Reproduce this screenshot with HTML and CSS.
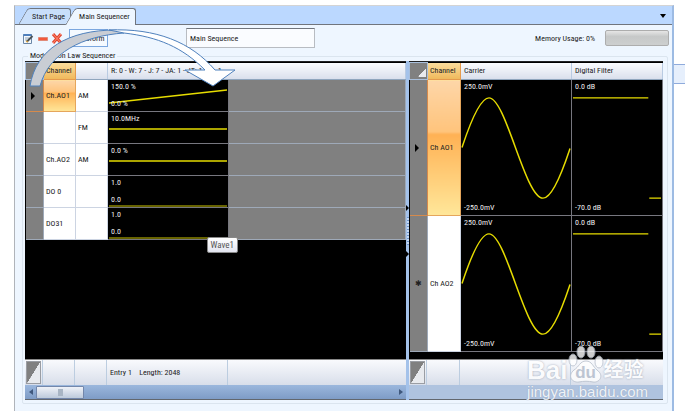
FILE: index.html
```html
<!DOCTYPE html>
<html lang="en">
<head>
    <meta charset="UTF-8">
    <meta name="viewport" content="width=device-width, initial-scale=1.0">
    <title>Main Sequencer</title>
    <link rel="stylesheet" href="styles.css">
</head>
<body>
    <main class="window">
        <!-- Tabs -->
        <nav class="tab-bar">
            <button class="tab"><span>Start Page</span></button>
            <button class="tab active"><span>Main Sequencer</span></button>
            <button class="tab-menu" aria-label="Tab list">
                <svg width="6" height="4" viewBox="0 0 6 4"><path d="M0 0h6L3 4z"/></svg>
            </button>
        </nav>

        <!-- Toolbar -->
        <div class="toolbar">
            <button class="tool" aria-label="Edit">
                <svg width="11" height="11" viewBox="0 0 11 11">
                    <path d="M.5 1.5h8v9h-8z" fill="#f4f8fc" stroke="#6b87a8"/>
                    <path d="M.5 1h8v2h-8z" fill="#4d7fbd"/>
                    <path d="M2 5h4M2 7h2" stroke="#93a7bb"/>
                    <path d="M4 8.500L9.500 3" stroke="#4a5358" stroke-width="2"/>
                    <path d="M3.500 9l1-1" stroke="#d39b34" stroke-width="2"/>
                </svg>
            </button>
            <button class="tool" aria-label="Remove">
                <svg width="10" height="11" viewBox="0 0 10 11"><path d="M.5 4.500h9v3h-9z" fill="#f2583c" stroke="#e08a78"/></svg>
            </button>
            <button class="tool" aria-label="Delete">
                <svg width="10" height="11" viewBox="0 0 10 11">
                    <path d="M1 1l8 9M9 1L1 10" stroke="#e2452f" stroke-width="3"/>
                    <path d="M1 1l8 9M9 1L1 10" stroke="#ff8a72" stroke-width="1"/>
                </svg>
            </button>
            <button class="wave-button">Waveform</button>
            <input class="sequence-name" type="text" value="Main Sequence" aria-label="Sequence name">
            <label class="memory" for="memory">Memory Usage: 0%</label>
            <progress class="memory-bar" id="memory" value="0" max="100"></progress>
        </div>

        <!-- Sequencer -->
        <fieldset class="group">
            <legend>Modulation Law Sequencer</legend>
            <div class="panes">
                <section class="pane">
                    <table class="grid law-grid">
                        <colgroup>
                            <col class="col-head"><col class="col-channel"><col class="col-type"><col class="col-wave"><col>
                        </colgroup>
                        <thead>
                            <tr>
                                <th class="corner"><i class="fold small"></i></th>
                                <th class="selected">Channel</th>
                                <th></th>
                                <th colspan="2">R: 0 - W: 7 - J: 7 - JA: 1 - JT: 1 - 1 - 1</th>
                            </tr>
                        </thead>
                        <tbody>
                            <tr>
                                <td class="row-head current"><i class="marker"></i></td>
                                <td class="channel selected">Ch.AO1</td>
                                <td class="type">AM</td>
                                <td class="wave"><div class="plot">
                                    <svg viewBox="0 0 120 30" preserveAspectRatio="none"><path d="M1 22L119 9"/></svg>
                                    <span>150.0 %</span><span>0.0 %</span>
                                </div></td>
                                <td class="empty"></td>
                            </tr>
                            <tr>
                                <td class="row-head"></td>
                                <td class="channel"></td>
                                <td class="type">FM</td>
                                <td class="wave"><div class="plot">
                                    <svg viewBox="0 0 120 30" preserveAspectRatio="none"><path d="M1 16H119"/></svg>
                                    <span>10.0MHz</span>
                                </div></td>
                                <td class="empty"></td>
                            </tr>
                            <tr>
                                <td class="row-head"></td>
                                <td class="channel">Ch.AO2</td>
                                <td class="type">AM</td>
                                <td class="wave"><div class="plot">
                                    <svg viewBox="0 0 120 30" preserveAspectRatio="none"><path d="M1 16H119"/></svg>
                                    <span>0.0 %</span>
                                </div></td>
                                <td class="empty"></td>
                            </tr>
                            <tr>
                                <td class="row-head"></td>
                                <td class="channel">DO 0</td>
                                <td class="type"></td>
                                <td class="wave low"><div class="plot">
                                    <svg viewBox="0 0 120 30" preserveAspectRatio="none"><path d="M1 29H119"/></svg>
                                    <span>1.0</span><span>0.0</span>
                                </div></td>
                                <td class="empty"></td>
                            </tr>
                            <tr>
                                <td class="row-head"></td>
                                <td class="channel">DO31</td>
                                <td class="type"></td>
                                <td class="wave low"><div class="plot">
                                    <svg viewBox="0 0 120 30" preserveAspectRatio="none"><path d="M1 29H119"/></svg>
                                    <span>1.0</span><span>0.0</span>
                                    <div class="tooltip">Wave1</div>
                                </div></td>
                                <td class="empty"></td>
                            </tr>
                        </tbody>
                    </table>
                    <div class="footer">
                        <div class="cell-head"><i class="fold"></i></div>
                        <div class="cell-channel"></div>
                        <div class="cell-type"></div>
                        <div class="cell-wave">Entry 1 &nbsp;&nbsp; Length: 2048</div>
                        <div class="cell-rest"></div>
                    </div>
                    <div class="scrollbar">
                        <button aria-label="Scroll left"><svg width="4" height="6" viewBox="0 0 4 6"><path d="M4 0v6L0 3z"/></svg></button>
                        <div class="thumb"></div>
                        <button aria-label="Scroll right"><svg width="4" height="6" viewBox="0 0 4 6"><path d="M0 0v6l4-3z"/></svg></button>
                    </div>
                </section>

                <div class="splitter">
                    <svg width="3" height="6" viewBox="0 0 3 6"><path d="M0 0v6l3-3z"/></svg>
                    <i class="grip"></i>
                    <svg width="3" height="6" viewBox="0 0 3 6"><path d="M0 0v6l3-3z"/></svg>
                </div>

                <section class="pane">
                    <table class="grid carrier-grid">
                        <colgroup>
                            <col class="col-head"><col class="col-name"><col class="col-carrier"><col>
                        </colgroup>
                        <thead>
                            <tr>
                                <th class="corner"><i class="fold small"></i></th>
                                <th class="selected">Channel</th>
                                <th>Carrier</th>
                                <th>Digital Filter</th>
                            </tr>
                        </thead>
                        <tbody>
                            <tr>
                                <td class="row-head current"><i class="marker"></i></td>
                                <td class="channel selected">Ch AO1</td>
                                <td class="wave"><div class="plot">
                                    <svg viewBox="0 0 110 135" preserveAspectRatio="none"><path d="M1 67C5 55 17 17 28 17C45 17 64 118 82 118C93 118 105 80 109 68"/></svg>
                                    <span>250.0mV</span><span>-250.0mV</span>
                                </div></td>
                                <td class="wave"><div class="plot">
                                    <svg viewBox="0 0 92 135" preserveAspectRatio="none"><path d="M1 17H78M79 118H91"/></svg>
                                    <span>0.0 dB</span><span>-70.0 dB</span>
                                </div></td>
                            </tr>
                            <tr>
                                <td class="row-head">✱</td>
                                <td class="channel">Ch AO2</td>
                                <td class="wave"><div class="plot">
                                    <svg viewBox="0 0 110 135" preserveAspectRatio="none"><path d="M1 67C5 55 17 17 28 17C45 17 64 118 82 118C93 118 105 80 109 68"/></svg>
                                    <span>250.0mV</span><span>-250.0mV</span>
                                </div></td>
                                <td class="wave"><div class="plot">
                                    <svg viewBox="0 0 92 135" preserveAspectRatio="none"><path d="M1 17H78M79 118H91"/></svg>
                                    <span>0.0 dB</span><span>-70.0 dB</span>
                                </div></td>
                            </tr>
                        </tbody>
                    </table>
                    <div class="footer">
                        <div class="cell-head"><i class="fold"></i></div>
                        <div class="cell-name"></div>
                        <div class="cell-carrier"></div>
                        <div class="cell-rest"></div>
                    </div>
                    <div class="scroll-blank"></div>
                </section>
            </div>
        </fieldset>

        <!-- Drag arrow from the row header to the wave cell -->
        <svg class="drag-arrow" width="210" height="62" viewBox="0 0 210 62">
            <path d="M2 59C8 22 40 3 88 3L96 6C54 9 21 26 12 59Z" fill="#c9cdd4" stroke="#4f81bd"/>
            <path d="M81 3C128 1 163 15 187 43H207L185 59L157 43H177C154 20 130 10 96 6Z" fill="#fff" stroke="#4f81bd"/>
        </svg>

        <!-- Watermark -->
        <div class="watermark">
            <div class="brand">
                <span>Bai</span>
                <span class="paw">
                    <svg width="36" height="38" viewBox="0 0 36 38">
                        <ellipse cx="5" cy="15" rx="4" ry="6"/>
                        <ellipse cx="13" cy="7" rx="4" ry="6"/>
                        <ellipse cx="23" cy="7" rx="4" ry="6"/>
                        <ellipse cx="31" cy="17" rx="4" ry="6"/>
                        <path d="M18 16C24 16 25 22 29 25C37 31 31 38 25 37C20 36 16 36 11 37C4 38-1 31 6 25C11 22 12 16 18 16Z"/>
                    </svg>
                    <b>du</b>
                </span>
                <span class="cjk">经验</span>
            </div>
            <div class="site">jingyan.baidu.com</div>
        </div>
    </main>
    <aside class="side-strip"></aside>
</body>
</html>
```
FILE: styles.css
```css
/* General */
* {
    box-sizing: border-box;
}

body {
    margin: 0;
    padding: 5px 0 4px 14px;
    height: 100vh;
    display: flex;
    background: #fff;
    color: #222;
    font-family: "Roboto Condensed", "Open Sans Condensed", Roboto, "Liberation Sans", sans-serif;
    font-size: 8px;
    line-height: 11px;
}

button,
input {
    font: inherit;
    color: inherit;
    padding: 0;
    margin: 0;
    border: none;
    background: none;
}

.window {
    position: relative;
    flex: 1;
    min-width: 0;
    display: flex;
    flex-direction: column;
    background: #eef6ff;
    border-left: 1px solid #b0b4ba;
    border-top: 1px solid #d4d4d4;
    border-right: 2px solid #9dbbe3;
}

.side-strip {
    width: 11px;
    height: 20px;
    margin-top: 59px;
    border: 1px solid #8fabdc;
    border-width: 1px 0;
    background: #e6effc;
}

/* Tabs */
.tab-bar {
    display: flex;
    align-items: flex-end;
    height: 19px;
    padding-left: 4px;
    background: #bbd8ff;
    border-bottom: 1px solid #70757d;
}

.tab {
    position: relative;
    z-index: 0;
    height: 16px;
    padding: 0 6px 0 13px;
    white-space: nowrap;
}

.tab::before,
.tab::after {
    content: "";
    position: absolute;
    z-index: -1;
    top: 0;
    bottom: 0;
    background: #c8defa;
    border-top: 1px solid #70757d;
}

.tab::before {
    left: 4px;
    width: 50%;
    border-left: 1px solid #70757d;
    border-radius: 3px 0 0 0;
    transform: skewX(-30deg);
}

.tab::after {
    left: 35%;
    right: 0;
    border-right: 1px solid #70757d;
    border-radius: 0 3px 0 0;
}

.tab.active {
    height: 17px;
    margin-bottom: -1px;
    margin-left: -5px;
}

.tab.active::before,
.tab.active::after {
    background: #eef6ff;
}

.tab-menu {
    margin-left: auto;
    padding: 6px;
    line-height: 0;
}

/* Toolbar */
.toolbar {
    display: flex;
    align-items: center;
    height: 26px;
    padding: 0 3px 0 8px;
    gap: 4px;
}

.tool {
    line-height: 0;
}

.wave-button {
    width: 39px;
    height: 18px;
    margin-left: 3px;
    border: 1px solid #7ba7df;
    background: #f5faff;
}

.sequence-name {
    width: 129px;
    height: 20px;
    margin-left: 74px;
    padding-left: 3px;
    background: #fafcff;
    border: 1px solid #b8bcc2;
    border-top-color: #70757d;
}

.memory {
    margin-left: auto;
    padding-right: 6px;
}

.memory-bar {
    appearance: none;
    width: 64px;
    height: 16px;
    border: 1px solid #adadad;
    border-radius: 2px;
    background: linear-gradient(#e6e6e6, #c6c8c8 40%, #cdcfcf);
}

.memory-bar::-webkit-progress-bar {
    background: transparent;
}

/* Group box */
.group {
    flex: 1;
    min-width: 0;
    min-height: 0;
    display: flex;
    flex-direction: column;
    margin: 0 4px 7px 7px;
    padding: 0 4px 3px 2px;
    border: 1px solid #dbe5ef;
    border-radius: 2px;
}

.group legend {
    margin-left: 3px;
    padding: 0 2px;
    line-height: 10px;
}

.panes {
    flex: 1;
    min-height: 0;
    display: grid;
    grid-template-columns: minmax(0, 3fr) 3px minmax(0, 2fr);
}

.pane {
    display: flex;
    flex-direction: column;
    min-height: 0;
    background: #000;
    border-top: 1px solid #222;
    border-bottom: 1px solid #62676e;
}

/* Grids */
.grid {
    width: 100%;
    table-layout: fixed;
    border-collapse: collapse;
}

.col-head,
.cell-head {
    width: 18px;
}

.col-channel,
.col-type,
.cell-channel,
.cell-type {
    width: 32px;
}

.col-wave,
.cell-wave {
    width: 121px;
}

.col-name,
.cell-name {
    width: 33px;
}

.col-carrier,
.cell-carrier {
    width: 111px;
}

.grid th {
    height: 17px;
    padding: 0 0 0 3px;
    font-weight: normal;
    text-align: left;
    white-space: nowrap;
    background: linear-gradient(#fbfcfe, #d9dfec);
    border-right: 1px solid #b9cbe2;
    border-bottom: 1px solid #8fa5bd;
}

.grid th.selected {
    padding-left: 2px;
    background: linear-gradient(#fadc9c, #f0b95c);
    border-color: #e59a4c;
}

.grid th.corner {
    padding: 0;
    background: #808080;
    border: 1px solid #a8bfdc;
}

.grid td {
    height: 32px;
    padding: 0;
    border-right: 1px solid #ccd4e2;
    border-bottom: 1px solid #ccd4e2;
    background: #fff;
    white-space: nowrap;
}

.carrier-grid td {
    height: 136px;
}

.grid .row-head,
.grid .empty {
    background: #808080;
    border-color: #9ea9b8;
    text-align: center;
}

.grid .row-head.current {
    border-color: #d58a4c;
}

.grid .channel,
.grid .type {
    padding-left: 2px;
}

.grid .channel.selected {
    background: linear-gradient(#fdd6a8, #ffc47c 38%, #ffb154 40%, #ffe79a);
    border-color: #e5a65c;
}

.grid .wave {
    background: #000;
    border: 1px solid #77777f;
}

.marker {
    display: block;
    width: 4px;
    margin-left: 5px;
    border: 4px solid transparent;
    border-left-color: #000;
    border-right: none;
}

/* Plots */
.plot {
    position: relative;
    display: flex;
    flex-direction: column;
    justify-content: space-between;
    height: 30px;
    padding: 0 3px 2px;
    color: #eee;
}

.carrier-grid .plot {
    height: 134px;
}

.plot svg {
    position: absolute;
    inset: 0;
    width: 100%;
    height: 100%;
    fill: none;
    stroke: #e6dc00;
    stroke-width: 1.5;
}

.low .plot svg {
    stroke: #8a8500;
}

.plot span {
    position: relative;
}

.tooltip {
    position: absolute;
    z-index: 2;
    top: 28px;
    right: -10px;
    padding: 1px 3px;
    color: #555;
    font-size: 9px;
    line-height: 12px;
    background: linear-gradient(#fff, #e3e5f0);
    border: 1px solid #888;
    border-radius: 2px;
}

/* Footer */
.footer {
    display: flex;
    height: 26px;
    margin-top: auto;
    line-height: 25px;
    background: linear-gradient(#f9fafd, #d8deea);
    border-top: 1px solid #888;
}

.footer > div {
    flex-shrink: 0;
    border-right: 1px solid #bccde0;
    white-space: nowrap;
}

.footer .cell-wave {
    padding-left: 3px;
}

.footer .cell-rest {
    flex: 1;
    border-right: none;
}

.fold {
    display: block;
    height: 23px;
    margin: 1px;
    border: 1px solid #9a9da3;
    background: linear-gradient(to bottom right, #808080 50%, #e8eaee 51%);
}

.fold.small {
    width: 8px;
    height: 9px;
    margin: 2px 1px 0 auto;
    border: none;
}

.scrollbar {
    display: flex;
    align-items: center;
    height: 14px;
    background: linear-gradient(#9bb7dd, #7e9cc6);
}

.scrollbar button {
    width: 11px;
    height: 14px;
    line-height: 0;
}

.scrollbar svg {
    fill: #3f587c;
}

.scrollbar button:last-child {
    margin-left: auto;
}

.thumb {
    width: 48px;
    height: 13px;
    border: 1px solid #7387ab;
    border-radius: 1px;
    background: linear-gradient(90deg, transparent 21px, #a8b5c4 21px, #a8b5c4 26px, transparent 26px) center / 100% 7px no-repeat, linear-gradient(#eff2f8, #bdcadb);
}

.scroll-blank {
    height: 14px;
    background: #afc3df;
}

/* Splitter */
.splitter {
    display: flex;
    flex-direction: column;
    align-items: center;
    justify-content: center;
    gap: 6px;
    background: #a4c2ea;
}

.grip {
    width: 2px;
    height: 28px;
    background: repeating-linear-gradient(#6f94c8 0 1px, #c5d9f4 1px 3px);
}

/* Overlays */
.drag-arrow {
    position: absolute;
    top: 21px;
    left: 13px;
}

.watermark {
    position: absolute;
    right: 24px;
    bottom: 10px;
    color: #fff;
    font-family: "Liberation Sans", sans-serif;
    opacity: 0.8;
}

.brand {
    display: flex;
    align-items: flex-end;
    height: 40px;
    font-size: 26px;
    font-weight: bold;
    line-height: 26px;
    text-shadow: 0 0 2px #8793a7;
}

.paw {
    display: grid;
    place-items: end center;
}

.paw svg,
.paw b {
    grid-area: 1 / 1;
}

.paw svg {
    fill: #fff;
    stroke: #b8c0cc;
}

.paw b {
    color: #b3bccb;
    font-size: 17px;
    line-height: 20px;
    z-index: 1;
    text-shadow: none;
}

.cjk {
    font-family: "Liberation Sans", "Noto Sans CJK SC", sans-serif;
    font-size: 20px;
}

.site {
    font-size: 15px;
    line-height: 18px;
    text-shadow: 0 0 1px #8793a7;
}
```
